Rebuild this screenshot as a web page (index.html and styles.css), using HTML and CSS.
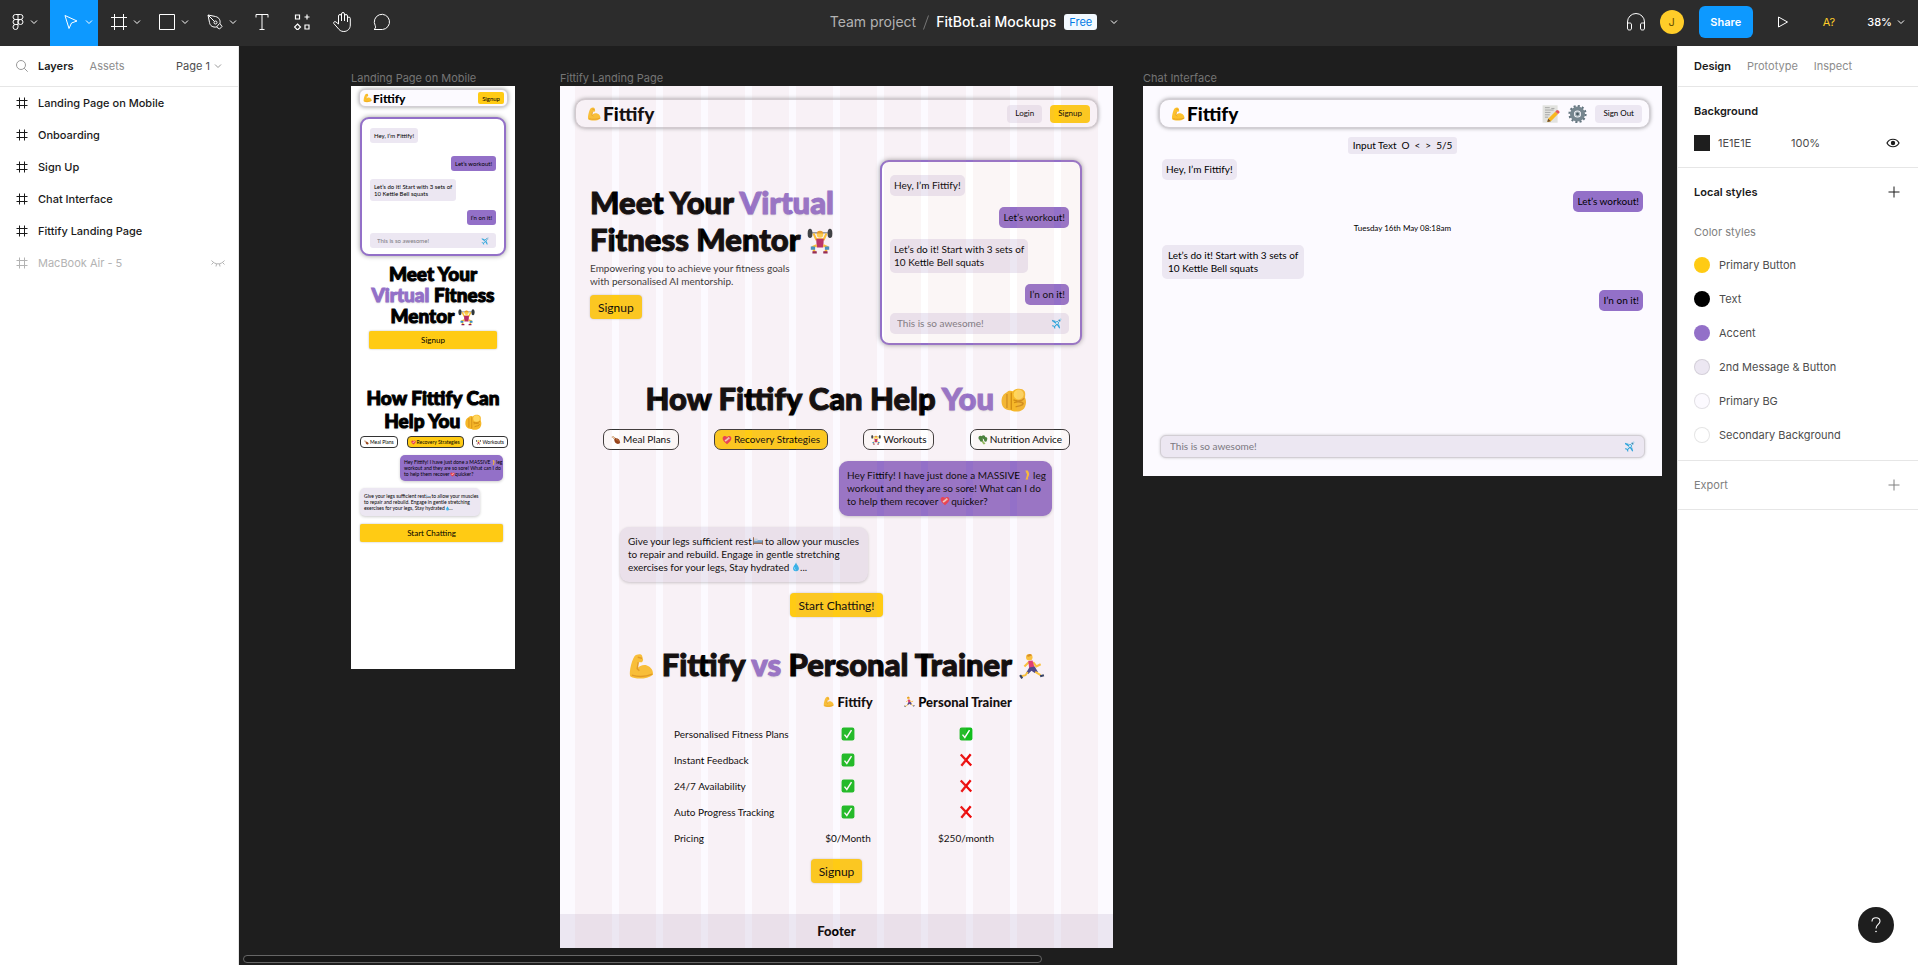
FILE: index.html
```html
<!DOCTYPE html>
<html lang="en">
<head>
<meta charset="utf-8">
<title>FitBot.ai Mockups</title>
<link rel="stylesheet" href="styles.css">
</head>
<body>
<svg class="sprite" aria-hidden="true">
  <symbol id="caret" viewBox="0 0 8 8"><path d="M1 2.5 4 5.5 7 2.5" fill="none" stroke="currentColor"/></symbol>
  <symbol id="hash" viewBox="0 0 12 12"><path d="M3.5 .5v11M8.500 .5v11M.5 3.500h11M.5 8.500h11" fill="none" stroke="currentColor"/></symbol>
  <symbol id="plus" viewBox="0 0 12 12"><path d="M6 .5v11M.5 6h11" fill="none" stroke="currentColor"/></symbol>
  <symbol id="arm" viewBox="0 0 24 24"><path d="M6 2.500C8 .5 12 0 13 2l1 4-1 2H9.500L8.500 14c2-3 6-4 9-3 4 1.500 6 5 5.500 8.500-5 4.500-16 4.500-20.500 2C.5 20 2.500 8 6 2.500Z" fill="#fcc12d"/><path d="M9.500 8 8.500 14l2 2M9 3.500l4 1M3.500 20c5 1.500 13 1.500 19-1" fill="none" stroke="#e39a19" stroke-width="1.300"/></symbol>
  <symbol id="lifter" viewBox="0 0 24 24"><path d="M1 4h22" stroke="#7a8388" stroke-width="1.200"/><ellipse cx="2.800" cy="4.500" rx="2.200" ry="4.300" fill="#30383c"/><ellipse cx="21.200" cy="4.500" rx="2.200" ry="4.300" fill="#30383c"/><path d="M6 4.500 8.500 10h7L18 4.500" fill="none" stroke="#fdbf2d" stroke-width="2"/><circle cx="12" cy="5.500" r="3" fill="#fdd04a"/><path d="M9 5a3 3 0 0 1 6 0l-1-.5h-4Z" fill="#e89b20"/><path d="M8.500 9.500h7l-.5 8H9Z" fill="#b82a63"/><path d="M9 15.500 5.500 17l1.500 5M15 15.500l3.500 1.500-1.500 5" fill="none" stroke="#fdbf2d" stroke-width="2.200"/><path d="M3.500 16.500h4v3h-4ZM16.500 16.500h4v3h-4Z" fill="#3a8fc4"/><path d="M5 22h4M15 22h4" stroke="#8f1d4c" stroke-width="2"/></symbol>
  <symbol id="plane" viewBox="0 0 24 24"><path d="m2 4 7 2 5 1 6-5c2-1 3 0 2 2l-5 6 1 5 2 7-2 1-5-8-4 4 .5 4-1.500.5-2-4-4-2 .5-1.500 4 .5 4-4-8-5.500Z" fill="#35a6dc"/><path d="M21.500 2.500 6 18M13 11l-3-4M13 11l4 3" stroke="#d8e6ee" stroke-width="2"/><path d="m17 4 3 3" stroke="#27516d" stroke-width="1.500"/></symbol>
  <symbol id="point" viewBox="0 0 24 24"><path d="M5 4.500C7 2.500 9.500 2.800 11 3.500 13 .5 20 .2 21.800 3.500c1 2 .4 4 .4 6 1.800 3 .8 9-2.200 11-3 2.500-9 2-11 .5C4 21.500.5 18 .5 13c0-4.500 1.500-7 4.500-8.500Z" fill="#f6b829"/><circle cx="16.300" cy="6.500" r="4.600" fill="#ffd65c"/><path d="M5.500 6v13M9.500 4.500v16" fill="none" stroke="#d28d15" stroke-width="1.200"/><path d="M11.500 11.500c4 1.500 8 1 10-1.500M12 14c3-1 8-1 8.500 1-.5 2-4 1.500-7 3" fill="none" stroke="#d28d15" stroke-width="1.200"/></symbol>
  <symbol id="drum" viewBox="0 0 24 24"><path d="M3 3c2-2 4 0 4 2l5 3c6 0 10 5 10 10-2 5-9 4-12 0-2-3-2-5-2-7L5 7C2 7 1 5 3 3Z" fill="#96441c"/><path d="M3 3c2-2 4 0 4 2l3 3-2 2-3-3C2 7 1 5 3 3Z" fill="#ead2b0"/><path d="M12 11c4 0 7 3 7 5" fill="none" stroke="#c9743a" stroke-width="2"/></symbol>
  <symbol id="heart" viewBox="0 0 24 24"><path d="M12 22C5 16 1 12 1.500 7 3 1 9 1 12 5c3-4 9-4 10.500 2C23 12 19 16 12 22Z" fill="#ea3a4b"/><path d="m6 13 10-8 3 3-10 8Z" fill="#f4cdbd"/><path d="m9 10 4 4M13 7l4 4" stroke="#db8d85"/></symbol>
  <symbol id="broc" viewBox="0 0 24 24"><path d="m9 10 9 11-4 2c-3-2-5-6-5-9Z" fill="#8dbb56"/><g fill="#3d7e33"><circle cx="6" cy="7" r="5"/><circle cx="13" cy="5" r="4.500"/><circle cx="18" cy="9" r="4.500"/><circle cx="8" cy="12" r="4"/><circle cx="18" cy="13" r="3"/></g></symbol>
  <symbol id="leg" viewBox="0 0 24 24"><path d="M8 1h6c2 4 4 7 3 11l-3 7 1 4H8l2-4 2-8L8 1Z" fill="#fbbb2e"/></symbol>
  <symbol id="bed" viewBox="0 0 24 24"><path d="M1 3v18M23 10v11" stroke="#8c5a3c" stroke-width="2.500"/><path d="M2 10h20v7H2Z" fill="#6da6d1"/><path d="M3 6h8v6H3Z" fill="#c4d4e0"/><path d="M2 16h20v3H2Z" fill="#8c5a3c"/></symbol>
  <symbol id="drop" viewBox="0 0 24 24"><path d="M12 1c2 6 7 9 7 14a7 7 0 0 1-14 0c0-5 5-8 7-14Z" fill="#2fb0ea"/><path d="M9 13c-1 3 0 5 2 6" fill="none" stroke="#bfe8fa" stroke-width="2"/></symbol>
  <symbol id="runner" viewBox="0 0 24 24"><circle cx="9.500" cy="3.500" r="3" fill="#fdc535"/><path d="M7 2.500a3 3 0 0 1 5-1l-3 1.500Z" fill="#d88c1c"/><path d="m9 8-4 4M13 8l3 4 4-2" fill="none" stroke="#fdc535" stroke-width="2"/><path d="m8.500 7 4-.5 2 7-5 1Z" fill="#e0356e"/><path d="m9.500 13 5-1 3 5-3 1-3-2-3 3-2-1Z" fill="#3f3f86"/><path d="m8 17-2 3-4 1M15 17l5 3" fill="none" stroke="#fdc535" stroke-width="1.800"/><path d="m1 20 2 3M19.500 21l3.500-1" stroke="#27395c" stroke-width="2"/></symbol>
  <symbol id="check" viewBox="0 0 24 24"><rect x="1" y="1" width="22" height="22" rx="3.500" fill="#11bd1c"/><path d="m6 13 4 5L18 5.500" fill="none" stroke="#fff" stroke-width="2.500"/></symbol>
  <symbol id="cross" viewBox="0 0 24 24"><path d="m3 2.500 18 19M20 2 4 22" stroke="#ee0a0a" stroke-width="4"/></symbol>
  <symbol id="memo" viewBox="0 0 24 24"><path d="M2 1h19v22H2Z" fill="#e2e2df"/><path d="M5 4h6M13 5h4M5 7h11M5 10h7M5 13h6M5 16h4" stroke="#9a9a9a"/><path d="m9 18 9-9 3.500 3-9 9-4.500 1Z" fill="#f8b71f"/><path d="m18 9 2-2c2 0 3.500 1.500 3.500 3l-2 2Z" fill="#e2595b"/><path d="m8 22 1-4 3.500 3Z" fill="#6b4b2e"/></symbol>
  <symbol id="gear" viewBox="0 0 24 24"><circle cx="12" cy="12" r="10" fill="none" stroke="#64757f" stroke-width="3" stroke-dasharray="2.600 2.640"/><circle cx="12" cy="12" r="7" fill="none" stroke="#76868f" stroke-width="5"/><circle cx="12" cy="12" r="3.500" fill="#a9b6bd"/><circle cx="12" cy="12" r="1.800" fill="#485861"/></symbol>
</svg>

<div class="app">
  <header class="toolbar">
    <nav class="tools" aria-label="Tools">
      <button class="tool tool-menu" aria-label="Main menu"><svg width="12" height="18" viewBox="0 0 12 18"><path d="M3.500 1.500H6v5H3.500a2.500 2.500 0 0 1 0-5ZM6 1.500h2.500a2.500 2.500 0 0 1 0 5H6M3.500 6.500H6v5H3.500a2.500 2.500 0 0 1 0-5ZM3.500 11.500H6V14a2.500 2.500 0 1 1-2.500-2.500Z" fill="none" stroke="currentColor"/><circle cx="8.500" cy="9" r="2.500" fill="none" stroke="currentColor"/></svg><svg class="caret"><use href="#caret"/></svg></button>
      <button class="tool tool-drop active" aria-label="Move"><svg width="16" height="16" viewBox="0 0 16 16"><path d="M2 1.500 14 7l-5.500 2L6 14.500Z" fill="none" stroke="currentColor"/></svg><svg class="caret"><use href="#caret"/></svg></button>
      <button class="tool tool-drop" aria-label="Frame"><svg width="16" height="16" viewBox="0 0 16 16"><path d="M3.500 0v16M12.500 0v16M0 3.500h16M0 12.500h16" stroke="currentColor"/></svg><svg class="caret"><use href="#caret"/></svg></button>
      <button class="tool tool-drop" aria-label="Rectangle"><svg width="16" height="16" viewBox="0 0 16 16"><path d="M.5.5h15v15H.5Z" fill="none" stroke="currentColor"/></svg><svg class="caret"><use href="#caret"/></svg></button>
      <button class="tool tool-drop" aria-label="Pen"><svg width="16" height="16" viewBox="0 0 16 16"><path d="M1 1l7.500 1.500c4 1 5 4 4.500 7l2 3-2.500 2.500-3-2C6 13.500 3 12 2.500 8.500ZM1 1l6.500 6.500M12.500 9.500l-3 3.500" fill="none" stroke="currentColor"/><circle cx="8.500" cy="8.500" r="1.500" fill="none" stroke="currentColor"/></svg><svg class="caret"><use href="#caret"/></svg></button>
      <button class="tool" aria-label="Text"><svg width="14" height="16" viewBox="0 0 14 16"><path d="M1 3.500v-3h12v3M7 .5v15M4.500 15.500h5" fill="none" stroke="currentColor"/></svg></button>
      <button class="tool" aria-label="Resources"><svg width="16" height="16" viewBox="0 0 16 16"><path d="M1.500 1h4v4h-4ZM11 11h4v4h-4ZM13 .5v5M10.500 3h5M3.500 10l3 3-3 3-3-3Z" fill="none" stroke="currentColor" stroke-width="1.200"/></svg></button>
      <button class="tool" aria-label="Hand"><svg width="18" height="20" viewBox="0 0 18 20"><path d="M5.500 12V4a1.500 1.500 0 0 1 3 0V2a1.500 1.500 0 0 1 3 0v2a1.500 1.500 0 0 1 3 0v2.500a1.400 1.400 0 0 1 2.800 0V13c0 4-3 6.500-6.500 6.500-3 0-4.500-1.500-6-3.500L.8 11.500c-.6-1.500 1-2.500 2.200-1.500l2.500 2M8.500 4v5M11.500 4v5M14.500 6v4" fill="none" stroke="currentColor"/></svg></button>
      <button class="tool" aria-label="Comment"><svg width="18" height="18" viewBox="0 0 18 18"><path d="M1 16.500c1.500-1 2-2 1.200-4A7.600 7.600 0 1 1 9.500 16.500Z" fill="none" stroke="currentColor"/></svg></button>
    </nav>
    <div class="doc">
      <span class="team">Team project</span><svg class="slash" width="6" height="15" viewBox="0 0 6 15"><path d="M5.500.5.500 14.500" stroke="currentColor"/></svg><span class="name">FitBot.ai Mockups</span><span class="badge">Free</span><svg class="caret"><use href="#caret"/></svg>
    </div>
    <div class="actions">
      <button class="plain" aria-label="Audio"><svg width="20" height="18" viewBox="0 0 20 18"><path d="M1.500 14V9a8.500 8.500 0 0 1 17 0v5M1.500 10h2c1.500 0 2 .5 2 2v3c0 1.500-.5 2-2 2s-2-.5-2-2ZM18.500 10h-2c-1.500 0-2 .5-2 2v3c0 1.500.5 2 2 2s2-.5 2-2Z" fill="none" stroke="currentColor"/></svg></button>
      <span class="avatar">J</span>
      <button class="share">Share</button>
      <button class="plain play" aria-label="Present"><svg width="10" height="12" viewBox="0 0 10 12"><path d="M.5 1v10L9.500 6Z" fill="none" stroke="currentColor"/></svg></button>
      <button class="plain missing">A?</button>
      <button class="plain zoom">38%<svg class="caret"><use href="#caret"/></svg></button>
    </div>
  </header>

  <aside class="left">
    <div class="tabs">
      <svg class="search" width="12" height="12" viewBox="0 0 12 12"><circle cx="5" cy="5" r="4.500" fill="none" stroke="currentColor"/><path d="m8.200 8.200 3.500 3.500" stroke="currentColor"/></svg>
      <button class="tab on">Layers</button><button class="tab">Assets</button>
      <button class="page">Page 1<svg class="caret"><use href="#caret"/></svg></button>
    </div>
    <ul class="layers">
      <li><svg class="hash"><use href="#hash"/></svg>Landing Page on Mobile</li>
      <li><svg class="hash"><use href="#hash"/></svg>Onboarding</li>
      <li><svg class="hash"><use href="#hash"/></svg>Sign Up</li>
      <li><svg class="hash"><use href="#hash"/></svg>Chat Interface</li>
      <li><svg class="hash"><use href="#hash"/></svg>Fittify Landing Page</li>
      <li class="hidden"><svg class="hash"><use href="#hash"/></svg>MacBook Air - 5<svg class="closed" width="14" height="7" viewBox="0 0 14 7"><path d="M.5.5c3.500 4.500 9.500 4.500 13 0M2.500 2.500.5 4.500M5.500 4 5 6.500M8.500 4l.5 2.500M11.500 2.500l2 2" fill="none" stroke="currentColor"/></svg></li>
    </ul>
  </aside>

  <main class="canvas">
    <section class="board board-mobile">
      <h2 class="board-name">Landing Page on Mobile</h2>
      <div class="sheet">
        <div class="bar"><span class="logo"><svg><use href="#arm"/></svg>Fittify</span><button class="btn">Signup</button></div>
        <div class="chat">
          <p class="msg">Hey, I’m Fittify!</p>
          <p class="msg mine">Let’s workout!</p>
          <p class="msg">Let’s do it! Start with 3 sets of<br>10 Kettle Bell squats</p>
          <p class="msg mine">I’n on it!</p>
          <div class="entry"><input aria-label="Message" value="This is so awesome!"><svg><use href="#plane"/></svg></div>
        </div>
        <h3 class="title">Meet Your<br><em>Virtual</em> Fitness<br>Mentor <svg><use href="#lifter"/></svg></h3>
        <button class="btn wide">Signup</button>
        <h3 class="title help">How Fittify Can<br>Help You <svg><use href="#point"/></svg></h3>
        <div class="chips">
          <button class="chip"><svg><use href="#drum"/></svg>Meal Plans</button>
          <button class="chip on"><svg><use href="#heart"/></svg>Recovery Strategies</button>
          <button class="chip"><svg><use href="#lifter"/></svg>Workouts</button>
        </div>
        <p class="talk ask">Hey Fittify! I have just done a MASSIVE <svg><use href="#leg"/></svg> leg<br>workout and they are so sore! What can I do<br>to help them recover <svg><use href="#heart"/></svg> quicker?</p>
        <p class="talk reply">Give your legs sufficient rest <svg><use href="#bed"/></svg> to allow your muscles<br>to repair and rebuild. Engage in gentle stretching<br>exercises for your legs, Stay hydrated <svg><use href="#drop"/></svg>...</p>
        <button class="btn wide start">Start Chatting</button>
      </div>
    </section>

    <section class="board board-landing">
      <h2 class="board-name">Fittify Landing Page</h2>
      <div class="sheet">
        <div class="body">
          <div class="bar"><span class="logo"><svg><use href="#arm"/></svg>Fittify</span><span class="bar-actions"><button class="btn soft">Login</button><button class="btn">Signup</button></span></div>
          <div class="hero">
            <div class="pitch">
              <h3 class="title">Meet Your <em>Virtual</em><br>Fitness Mentor <svg><use href="#lifter"/></svg></h3>
              <p class="lead">Empowering you to achieve your fitness goals<br>with personalised AI mentorship.</p>
              <button class="btn big">Signup</button>
            </div>
            <div class="chat">
              <p class="msg">Hey, I’m Fittify!</p>
              <p class="msg mine">Let’s workout!</p>
              <p class="msg">Let’s do it! Start with 3 sets of<br>10 Kettle Bell squats</p>
              <p class="msg mine">I’n on it!</p>
              <div class="entry"><input aria-label="Message" value="This is so awesome!"><svg><use href="#plane"/></svg></div>
            </div>
          </div>
          <h3 class="title help">How Fittify Can Help <em>You</em> <svg><use href="#point"/></svg></h3>
          <div class="chips">
            <button class="chip"><svg><use href="#drum"/></svg>Meal Plans</button>
            <button class="chip on"><svg><use href="#heart"/></svg>Recovery Strategies</button>
            <button class="chip"><svg><use href="#lifter"/></svg>Workouts</button>
            <button class="chip"><svg><use href="#broc"/></svg>Nutrition Advice</button>
          </div>
          <p class="talk ask">Hey Fittify! I have just done a MASSIVE <svg><use href="#leg"/></svg> leg<br>workout and they are so sore! What can I do<br>to help them recover <svg><use href="#heart"/></svg> quicker?</p>
          <p class="talk reply">Give your legs sufficient rest <svg><use href="#bed"/></svg> to allow your muscles<br>to repair and rebuild. Engage in gentle stretching<br>exercises for your legs, Stay hydrated <svg><use href="#drop"/></svg>...</p>
          <button class="btn big start">Start Chatting!</button>
          <h3 class="title versus"><svg><use href="#arm"/></svg> Fittify <em>vs</em> Personal Trainer <svg><use href="#runner"/></svg></h3>
          <table class="compare">
            <thead><tr><td></td><th scope="col"><svg><use href="#arm"/></svg> Fittify</th><th scope="col"><svg><use href="#runner"/></svg> Personal Trainer</th></tr></thead>
            <tbody>
              <tr><th scope="row">Personalised Fitness Plans</th><td><svg><use href="#check"/></svg></td><td><svg><use href="#check"/></svg></td></tr>
              <tr><th scope="row">Instant Feedback</th><td><svg><use href="#check"/></svg></td><td><svg><use href="#cross"/></svg></td></tr>
              <tr><th scope="row">24/7 Availability</th><td><svg><use href="#check"/></svg></td><td><svg><use href="#cross"/></svg></td></tr>
              <tr><th scope="row">Auto Progress Tracking</th><td><svg><use href="#check"/></svg></td><td><svg><use href="#cross"/></svg></td></tr>
              <tr><th scope="row">Pricing</th><td>$0/Month</td><td>$250/month</td></tr>
            </tbody>
          </table>
          <button class="btn big join">Signup</button>
        </div>
        <div class="footer">Footer</div>
        <div class="columns" aria-hidden="true"><i></i><i></i><i></i><i></i><i></i><i></i><i></i><i></i><i></i><i></i><i></i><i></i></div>
      </div>
    </section>

    <section class="board board-chat">
      <h2 class="board-name">Chat Interface</h2>
      <div class="sheet">
        <div class="bar"><span class="logo"><svg><use href="#arm"/></svg>Fittify</span><span class="bar-actions"><svg><use href="#memo"/></svg><svg><use href="#gear"/></svg><button class="btn soft">Sign Out</button></span></div>
        <div class="thread">
          <p class="pill"><span>Input Text</span><span>O</span><span>&lt;</span><span>&gt;</span><span>5/5</span></p>
          <p class="msg">Hey, I’m Fittify!</p>
          <p class="msg mine">Let’s workout!</p>
          <time class="date">Tuesday 16th May 08:18am</time>
          <p class="msg roomy">Let’s do it! Start with 3 sets of<br>10 Kettle Bell squats</p>
          <p class="msg mine">I’n on it!</p>
          <div class="entry"><input aria-label="Message" value="This is so awesome!"><svg><use href="#plane"/></svg></div>
        </div>
      </div>
    </section>
    <div class="scroll"></div>
  </main>

  <aside class="right">
    <div class="tabs"><button class="tab on">Design</button><button class="tab">Prototype</button><button class="tab">Inspect</button></div>
    <section class="group">
      <h2 class="group-name">Background</h2>
      <div class="fill"><span class="square"></span><span class="hex">1E1E1E</span><span class="alpha">100%</span><button class="icon" aria-label="Toggle visibility"><svg width="14" height="10" viewBox="0 0 14 10"><path d="M1 5c2.500-5 9.500-5 12 0-2.500 5-9.500 5-12 0Z" fill="none" stroke="currentColor" stroke-width="1.200"/><circle cx="7" cy="5" r="2.200" fill="currentColor"/></svg></button></div>
    </section>
    <section class="group styles">
      <div class="head"><h2 class="group-name">Local styles</h2><button class="icon" aria-label="Add style"><svg class="plus"><use href="#plus"/></svg></button></div>
      <h3 class="sub">Color styles</h3>
      <ul class="swatches">
        <li><i class="dot yellow"></i>Primary Button</li>
        <li><i class="dot black"></i>Text</li>
        <li><i class="dot purple"></i>Accent</li>
        <li><i class="dot soft"></i>2nd Message &amp; Button</li>
        <li><i class="dot pale"></i>Primary BG</li>
        <li><i class="dot white"></i>Secondary Background</li>
      </ul>
    </section>
    <section class="group export"><h2 class="sub">Export</h2><button class="icon" aria-label="Add export"><svg class="plus"><use href="#plus"/></svg></button></section>
    <button class="help-button" aria-label="Help"><svg width="10" height="16" viewBox="0 0 10 16"><path d="M1 4.500C1 2 2.500.7 5 .7s4 1.600 4 3.600C9 7.500 5 7.500 5 11.500" fill="none" stroke="currentColor" stroke-width="1.100"/><circle cx="5" cy="14.500" r=".8" fill="currentColor"/></svg></button>
  </aside>
</div>
</body>
</html>
```

FILE: styles.css
```css
* { box-sizing: border-box; }
body { margin: 0; font: 11px/16px Inter, sans-serif; color: #1a1a1a; }
button, input { font: inherit; color: inherit; background: none; border: 0; padding: 0; margin: 0; }
h2, h3, p, ul { margin: 0; padding: 0; font-size: inherit; font-weight: inherit; list-style: none; }
svg { flex: none; }
.sprite { position: absolute; width: 0; height: 0; }
.caret { width: 8px; height: 8px; }

.app { display: grid; grid-template: 46px minmax(0, 1fr) / 239px minmax(0, 1fr) 241px; height: 100vh; overflow: hidden; }

/* toolbar */
.toolbar { grid-column: 1 / -1; display: grid; grid-template-columns: 1fr auto 1fr; background: #2c2c2c; color: #fff; }
.tools { display: flex; }
.tool { display: flex; align-items: center; justify-content: center; width: 40px; height: 46px; padding-bottom: 2px; }
.tool-menu { width: 50px; gap: 6px; }
.tool-drop { width: 48px; gap: 6px; padding-left: 8px; }
.active { background: #0d99ff; }
.doc { display: flex; align-items: center; padding: 0 0 2px 30px; font-size: 14px; }
.team { color: #b3b3b3; }
.slash { color: #777; margin: 0 7px; }
.name { font-weight: 500; }
.badge { margin: 0 13px 0 8px; padding: 0 5px; border-radius: 3px; background: #f2f9ff; color: #007be5; font-size: 11px; line-height: 16px; }
.actions { display: flex; align-items: center; justify-content: flex-end; padding: 0 13px 2px 0; }
.plain { display: flex; align-items: center; }
.avatar { width: 24px; margin: 0 15px 0 14px; border-radius: 50%; background: #ffcd29; color: #6b5200; text-align: center; line-height: 24px; }
.share { width: 54px; height: 32px; border-radius: 6px; background: #0d99ff; font-weight: 600; }
.play { margin: 0 35px 0 25px; }
.missing { color: #ffcd29; margin-right: 32px; }
.zoom { gap: 5px; font-weight: 500; }

/* side panels */
.left, .right { background: #fff; }
.left { border-right: 1px solid #e6e6e6; }
.tabs { display: flex; align-items: center; gap: 16px; height: 41px; border-bottom: 1px solid #e6e6e6; padding: 0 16px; }
.tab { color: #8c8c8c; }
.tab.on { color: #1a1a1a; font-weight: 600; }
.search { color: #999; margin-right: -6px; }
.page { display: flex; align-items: center; gap: 4px; margin-left: auto; color: #4d4d4d; }
.page .caret { color: #999; }
.layers li { display: flex; align-items: center; gap: 10px; height: 32px; padding: 0 13px 0 16px; font-weight: 500; }
.layers .hidden { color: #b3b3b3; font-weight: 400; }
.hash, .plus { width: 12px; height: 12px; }
.closed { margin-left: auto; }

.right { position: relative; border-left: 1px solid #e6e6e6; }
.group { padding: 16px 18px 16px 16px; border-bottom: 1px solid #e6e6e6; }
.group-name { font-weight: 600; }
.fill { display: flex; align-items: center; margin-top: 16px; color: #4d4d4d; }
.square { width: 16px; height: 16px; margin-right: 8px; background: #1e1e1e; }
.hex { width: 73px; }
.icon { display: flex; margin-left: auto; color: #1a1a1a; }
.head, .export { display: flex; align-items: center; }
.sub, .export .icon { color: #808080; }
.styles { padding-bottom: 8px; }
.styles .sub { margin-top: 24px; }
.swatches { margin-top: 8px; color: #4d4d4d; }
.swatches li { display: flex; align-items: center; gap: 9px; height: 34px; }
.dot { width: 16px; height: 16px; border-radius: 50%; border: 1px solid rgba(0, 0, 0, .1); }
.yellow { background: #ffcb14; border: 0; }
.black { background: #000; }
.purple { background: #9370c8; border: 0; }
.dot.soft { background: #ece7f2; }
.pale { background: #fcfaff; }
.white { background: #fff; }
.help-button { position: absolute; right: 24px; bottom: 22px; display: grid; place-items: center; width: 36px; height: 36px; border-radius: 50%; background: #1e1e1e; color: #fff; }

/* canvas */
.canvas { position: relative; overflow: hidden; background: #1e1e1e; }
.board { position: absolute; top: 24px; }
.board-name { color: #757575; line-height: 16px; }
.board-mobile { left: 112px; width: 164px; }
.board-landing { left: 321px; width: 553px; }
.board-chat { left: 904px; width: 519px; }
.scroll { position: absolute; left: 4px; bottom: 2px; width: 799px; height: 8px; border: 1px solid #666; border-radius: 4px; background: #161616; }

/* mockup artwork */
.sheet { position: relative; display: flex; flex-direction: column; background: #fcfaff; color: #000; font: 400 10px/13px Lato, sans-serif; }
.bar { display: flex; align-items: center; justify-content: space-between; flex: none; height: 29px; padding: 0 7px 0 11px; border: 1px solid #d2ced4; border-radius: 10px; background: #fcfaff; box-shadow: 0 0 4px rgba(0, 0, 0, .4); }
.bar-actions { display: flex; align-items: center; gap: 8px; }
.bar-actions svg { width: 19px; height: 20px; }
.logo, .title, .footer, .compare thead th { font-family: "Lato Black", Lato, sans-serif; font-weight: 900; }
.logo { display: flex; align-items: center; gap: 2px; font-size: 19px; }
.logo svg { width: 14px; height: 16px; }
.btn { padding: 0 8px; height: 18px; border-radius: 4px; background: #ffcb14; font-size: 8px; white-space: nowrap; }
.btn.soft { background: #ece7f2; }
.btn.big { height: 24px; font-size: 12px; box-shadow: 0 0 2px rgba(0, 0, 0, .25); }
.chat { display: flex; flex-direction: column; align-items: flex-start; border: 2px solid #9370c8; border-radius: 9px; background: #fff; box-shadow: 0 0 5px rgba(0, 0, 0, .4); }
.msg { padding: 4px; border-radius: 5px; background: #ece7f2; white-space: nowrap; }
.msg.mine { align-self: flex-end; background: #9370c8; }
.entry { display: flex; align-items: center; align-self: stretch; height: 21px; padding: 0 7px; border-radius: 5px; background: #ece7f2; color: #7b7880; }
.entry input { flex: 1; min-width: 0; }
.entry svg { width: 11px; height: 11px; }
.title { font-size: 31px; line-height: 37px; white-space: nowrap; -webkit-text-stroke: 1px; text-shadow: 0 1px 2px rgba(0, 0, 0, .2); }
.title em { font-style: normal; color: #9370c8; }
.title svg { width: 26px; height: 27px; vertical-align: -4px; }
.chips { display: flex; justify-content: space-between; }
.chip { display: flex; align-items: center; gap: 2px; height: 21px; padding: 0 7px; border: 1px solid #333; border-radius: 7px; background: #fff; white-space: nowrap; }
.chip.on { background: #ffcb14; }
.chip svg { width: 10px; height: 10px; }
.talk { padding: 8px; border-radius: 9px; white-space: nowrap; box-shadow: 0 1px 3px rgba(0, 0, 0, .2); }
.talk svg { width: 10px; height: 10px; margin: 0 -1px; vertical-align: -1px; }
.ask { background: #9370c8; }
.reply { background: #ece7f2; }

/* landing page */
.board-landing .sheet { height: 862px; }
.body { display: flex; flex-direction: column; flex: 1; padding: 13px 15px 0; }
.hero { display: flex; align-items: center; justify-content: space-between; margin-top: 32px; padding: 0 16px 0 15px; }
.pitch { padding-bottom: 2px; }
.lead { margin: 4px 0 7px; color: #333; }
.board-landing .chat { gap: 11px; width: 202px; padding: 13px 11px 9px 8px; }
.board-landing .chat .entry { margin-top: -3px; }
.board-landing .help { margin-top: 35px; text-align: center; }
.board-landing .chips { margin: 12px 28px 0; }
.board-landing .ask { align-self: flex-end; width: 213px; margin: 11px 46px 0 0; }
.board-landing .reply { align-self: flex-start; width: 248px; margin: 11px 0 0 45px; }
.board-landing .start { align-self: center; margin-top: 11px; }
.versus { margin-top: 29px; text-align: center; }
.compare { margin-left: 99px; width: 374px; table-layout: fixed; border-collapse: collapse; text-align: center; }
.compare td, .compare th { height: 26px; padding: 0; font-weight: 400; }
.compare thead td, .compare thead th { height: 38px; font-size: 13px; font-weight: 900; white-space: nowrap; }
.compare thead td { width: 138px; }
.compare thead th { width: 72px; }
.compare thead th:last-child { width: 164px; padding-right: 16px; }
.compare tbody th { text-align: left; }
.compare svg { width: 14px; height: 14px; vertical-align: middle; }
.compare thead svg { width: 11px; height: 12px; vertical-align: -1px; }
.join { align-self: center; margin-top: 8px; }
.footer { height: 34px; background: #ece7f2; text-align: center; font-size: 13px; line-height: 34px; }
.columns { position: absolute; inset: 0; display: grid; grid-template-columns: repeat(12, 1fr); gap: 7px; padding: 0 15px; pointer-events: none; }
.columns i { background: rgba(220, 170, 165, .1); }

/* mobile page */
.board-mobile .sheet { height: 583px; padding: 3px 8px 0; background: #fff; font-size: 6px; line-height: 7px; }
.board-mobile .bar { height: 18px; padding: 0 3px; border-radius: 6px; margin-right: -1px; }
.board-mobile .logo { gap: 1px; font-size: 12px; }
.board-mobile .logo svg { width: 9px; height: 10px; }
.board-mobile .btn { height: 12px; padding: 0 4px; font-size: 6px; border-radius: 2px; }
.board-mobile .chat { gap: 8px; margin: 10px 1px 0; padding: 9px 8px 6px; }
.board-mobile .msg, .board-mobile .entry { border-radius: 3px; }
.board-mobile .msg:first-child { margin-bottom: 4px; }
.board-mobile .mine { margin-top: 1px; }
.board-mobile .entry { height: 15px; }
.board-mobile .entry svg { width: 8px; height: 8px; }
.board-mobile .title { margin-top: 7px; font-size: 19px; line-height: 21px; text-align: center; }
.board-mobile .title svg { width: 17px; height: 17px; vertical-align: -3px; }
.board-mobile .wide { height: 18px; margin: 5px 10px 0; font-size: 8px; box-shadow: 0 0 2px rgba(0, 0, 0, .3); }
.board-mobile .help { margin-top: 37px; line-height: 23px; }
.board-mobile .chips { margin: 4px -1px 0 1px; }
.board-mobile .chip { height: 12px; padding: 0 3px; gap: 1px; border-radius: 4px; font-size: 5px; }
.board-mobile .chip svg, .board-mobile .talk svg { width: 5px; height: 5px; }
.board-mobile .talk { padding: 4px; border-radius: 5px; font-size: 5px; line-height: 6px; }
.board-mobile .ask { align-self: flex-end; width: 103px; margin: 7px 4px 0 0; }
.board-mobile .reply { align-self: flex-start; width: 120px; margin: 7px 0 0 1px; padding: 5px 4px; }
.board-mobile .start { margin: 8px 4px 0 1px; }

/* chat page */
.board-chat .sheet { height: 390px; padding: 13px 12px 18px 16px; }
.thread { display: flex; flex-direction: column; align-items: flex-start; flex: 1; padding: 9px 7px 0 3px; }
.pill { display: flex; gap: 5px; align-self: center; padding: 2px 5px; border-radius: 3px; background: #ece7f2; }
.thread .msg { margin-top: 5px; }
.thread .mine { margin-top: 11px; }
.date { align-self: center; margin: 10px 0 5px; font-size: 8px; }
.thread .roomy { padding: 4px 6px; }
.thread .entry { height: 23px; margin: auto -2px 0; padding: 0 9px; border: 1px solid #d2ced4; border-radius: 6px; box-shadow: 0 0 3px rgba(0, 0, 0, .2); }
```
